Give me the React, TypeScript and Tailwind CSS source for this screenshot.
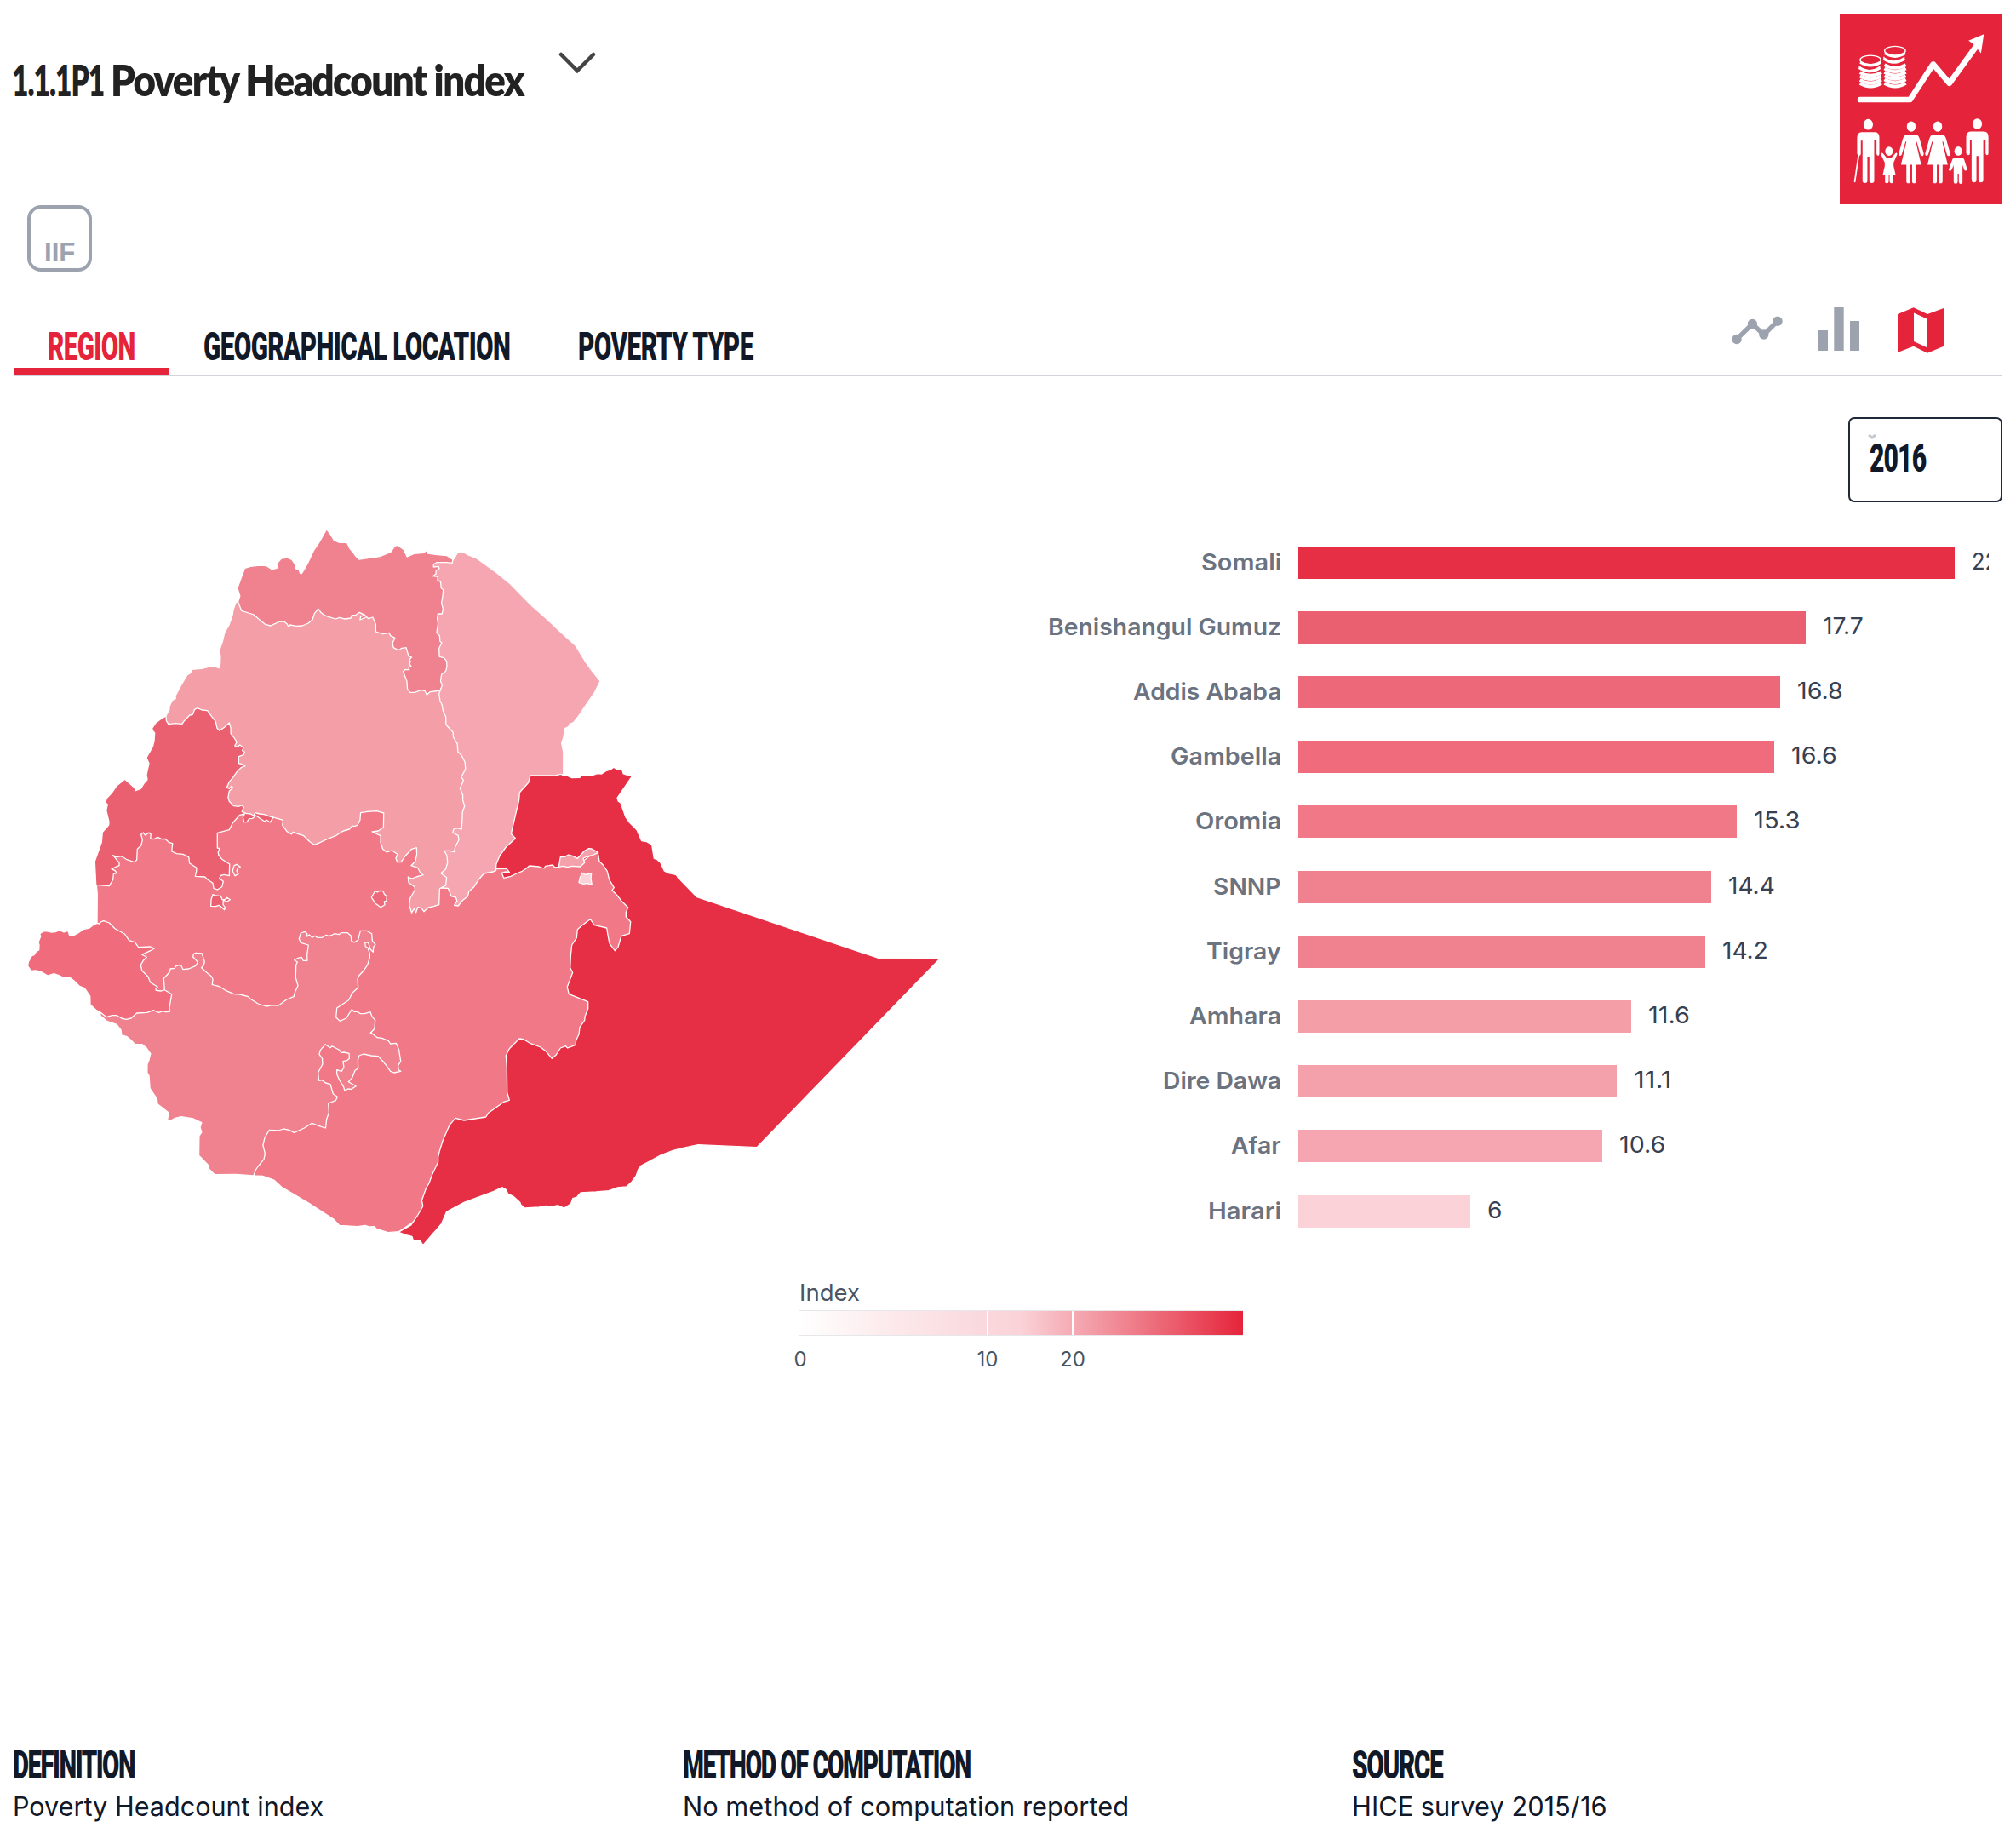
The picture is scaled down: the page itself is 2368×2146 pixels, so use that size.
import { useLayoutEffect, useRef, useState } from "react";
import type { ReactNode } from "react";

/* ---------- text squeezed to a set measure ---------- */

type FitProps = { width: number; className?: string; children: ReactNode };

function FitText({ width, className = "", children }: FitProps) {
  const ref = useRef<HTMLSpanElement>(null);
  const [scale, setScale] = useState(1);
  useLayoutEffect(() => {
    if (ref.current) setScale(width / ref.current.offsetWidth);
  }, [width]);
  return (
    <span className={`block whitespace-nowrap ${className}`} style={{ width }}>
      <span ref={ref} className="inline-block origin-left" style={{ transform: `scaleX(${scale})` }}>
        {children}
      </span>
    </span>
  );
}

/* ---------- map geometry ---------- */

// Boundaries are digitised per sheet: origin x, origin y, units per pixel in x and y.
const SHEETS = {
  N: [180, 600, 2.8, 3],
  W: [20, 800, 3, 3],
  C: [400, 880, 3, 3],
  S: [20, 1060, 2.8, 3],
  E: [590, 1030, 3, 3],
} as const;

type Sheet = keyof typeof SHEETS;
type Arc = [Sheet, string];

function toPath(arcs: Arc[]) {
  const points = arcs.flatMap(([sheet, data]) => {
    const [ox, oy, sx, sy] = SHEETS[sheet];
    return data.split(" ").map((pair) => {
      const [x, y] = pair.split(",").map(Number);
      return `${(ox + x / sx).toFixed(1)} ${(oy + y / sy).toFixed(1)}`;
    });
  });
  return `M${points.join("L")}Z`;
}

const C = {
  somali: "#e62e44",
  benishangul: "#eb6070",
  addis: "#ed697a",
  gambella: "#f06c7c",
  oromia: "#f17886",
  snnp: "#f0818e",
  tigray: "#ef828e",
  amhara: "#f49ea7",
  direDawa: "#f5a1ac",
  afar: "#f6a6b1",
  harari: "#fad2d7",
};

// Painted in order; later regions cover the hidden parts of earlier ones.
const REGIONS: { name: string; fill: string; arcs: Arc[] }[] = [
  {
    name: "Oromia",
    fill: C.oromia,
    arcs: [
      ["W", "280,718 283,750 282,853 300,1000"],
      ["S", "600,700 778,963 808,964 845,978 870,1003 960,1060 1040,1115 1060,1138 1120,1142 1145,1138 1160,1143 1175,1142 1182,1150 1220,1163 1255,1160 1340,1100"],
      ["E", "100,1000 600,400"],
      ["C", "1080,600 1000,350 700,300 500,200"],
      ["N", "600,900"],
      ["W", "700,300 400,500"],
    ],
  },
  {
    name: "SNNP",
    fill: C.snnp,
    arcs: [
      ["W", "520,1088 517,1048 538,1025 540,1014 555,1012 560,1004 572,1000 578,1002 585,1016 605,1014 630,1003 637,990 620,972 622,962 630,958 652,960 661,990 657,1002 650,1010 670,1028 685,1040 690,1050 688,1070 710,1075 735,1090 765,1103 785,1104 815,1112 822,1120 850,1137 878,1146 900,1142 922,1143 950,1122 975,1112 980,1095 990,1073 982,1045 983,1000 988,990 977,983 990,976 1003,973 1008,985 1023,985 1022,965 1027,930 1000,922 994,908 1000,888 1015,883 1022,890 1022,900 1030,894 1040,904 1050,898 1058,904 1075,904 1090,895 1098,899 1110,895 1118,890 1135,893 1142,887 1165,887 1177,898 1178,915 1188,921 1202,912 1210,880 1232,880 1250,890 1252,915 1263,928 1256,938 1255,955 1245,945 1238,922 1226,920 1228,935 1236,940 1243,960 1243,975 1235,1000 1222,1020 1205,1038 1200,1050 1202,1080 1180,1100 1175,1112 1168,1125 1127,1152 1124,1185 1138,1198 1160,1188 1180,1157 1188,1165 1200,1165 1210,1172 1225,1172 1245,1166 1250,1180 1262,1195 1260,1225 1246,1240"],
      ["S", "1163,458 1185,476 1200,478 1222,488 1228,498 1247,496 1256,520 1262,560 1253,575 1255,590 1262,595 1240,600 1228,595 1215,575 1205,562 1188,542 1165,540 1140,534 1125,540 1121,555 1122,585 1112,592 1102,618 1090,632 1115,647 1100,658 1088,657 1078,664 1074,650 1060,625 1052,605 1052,590 1068,595 1075,580 1072,560 1085,557 1093,550 1092,532 1075,528 1066,530 1060,520 1036,506 1030,512 1014,500 998,520 994,535 1004,550 1005,570 990,600 993,628 1003,626 1015,636 1030,640 1040,675 1054,685 1048,698 1024,708 1026,740 1018,765 1015,795 1000,790 985,784 970,778 945,795 912,811 895,802 877,798 860,804 830,802 815,828 809,855 816,885 812,905 793,930 785,942 778,963 720,958 650,959 632,940 628,925 598,892 599,823 607,810 602,792 607,776 595,770 580,762 540,755 520,760 500,772 495,765 498,740 480,725 462,710 460,692 437,655 434,610 428,600 428,572 434,555 439,533 425,512 412,500 388,500 375,485 360,472 344,468 342,450 328,430 295,418 275,400 273,390"],
      ["W", "330,1160 500,1110"],
    ],
  },
  {
    name: "Gambella",
    fill: C.gambella,
    arcs: [
      ["W", "282,853 268,860 255,870 233,875 215,888 197,898 185,897 180,880 165,885 150,878 135,884 122,885 110,882 95,881 80,890 83,900 75,920 78,930 77,948 68,952 60,965 52,968 40,990 38,1005 50,1021 65,1020 80,1023 92,1028 108,1038 130,1031 145,1036 158,1042 185,1044 200,1055 220,1075 238,1082 257,1110 258,1140 280,1160 295,1168 315,1184 335,1178 352,1178 368,1188 385,1192 402,1188 422,1170 458,1168 480,1160 500,1168 512,1163 525,1166 538,1165 537,1150 545,1103 520,1088 508,1092 490,1090 489,1084 496,1078 470,1062 462,1042 440,1020 436,1000 445,985 457,973 440,964 470,950 484,942 470,936 428,938 415,920 395,914 380,892 345,872 325,852 305,845 295,849 290,855"],
    ],
  },
  {
    name: "Somali",
    fill: C.somali,
    arcs: [
      ["C", "779,88 785,93 800,94 815,101 843,100 847,94 860,92 870,93 890,91 905,86 920,87 935,77 952,72 962,64 975,72 991,69 997,87 1010,91 1030,91 975,172 979,184 987,189 1005,240 1017,257 1044,284 1061,323 1079,326 1097,337 1105,385 1116,389 1127,399 1141,429 1156,437 1181,442 1201,461"],
      ["E", "617,0 686,71 1328,287 1542,288 897,953 690,944 630,957 600,965 560,980 490,1017 479,1031 472,1053 457,1074 437,1092 405,1095 375,1106 330,1110 276,1113 263,1128 248,1133 242,1151 218,1167 195,1157 175,1162 155,1159 130,1164 79,1167 66,1156 62,1147 38,1125 20,1117 13,1102 0,1094"],
      ["S", "1568,1018 1470,1057 1413,1090 1396,1132 1335,1208 1326,1192 1303,1191 1299,1177 1280,1172 1255,1162 1295,1138 1318,1102 1335,1070 1331,1050 1345,1008 1355,990 1365,960 1385,915 1385,898 1390,875 1400,840 1422,785 1442,760 1470,768 1542,756 1550,742 1568,728"],
      ["C", "560,1254 575,1243 595,1237 587,1210 586,1120 583,1080 595,1055 612,1038 630,1020 645,1022 670,1037 705,1050 725,1066 745,1090 760,1077 775,1053 793,1046 800,1053 828,1042 830,1025 840,1005 843,980 860,955 862,940 872,915 872,890 805,863 799,838 818,787 809,770 811,730 815,690 832,665 835,635 850,622 880,599 895,620 938,630 942,655 948,685 967,710 978,697 990,658 1018,650 1022,608 1006,590 1006,575 1013,557 990,535 975,515 957,497 964,488 947,460 940,430 925,408 912,395 907,365 895,362 860,390 840,400 790,400 769,415 755,417 748,408 735,410 722,412 717,420 700,414 665,411 655,420 640,430 620,438 600,448 575,454 568,436 582,432 595,434 585,420 547,422 530,400 560,260 600,100 660,70 779,70"],
    ],
  },
  {
    name: "Benishangul Gumuz",
    fill: C.benishangul,
    arcs: [
      ["W", "525,123 505,135 489,147 476,166 478,175 485,183 483,210 478,232 456,270 465,290 456,330 459,347 447,361 436,379 418,386 414,376 380,346 351,369 334,394 315,414 312,428 319,435 314,455 324,496 323,507 301,533 298,568 274,635 278,718 325,722 338,700 340,680 352,676 345,668 333,662 348,655 360,650 360,640 338,614 350,620 368,617 385,628 413,638 422,630 424,592 437,580 442,560 437,540 445,534 452,543 465,534 472,540 470,555 482,557 495,550 510,557 522,556 535,568 548,572 545,600 562,608 585,610 605,620 608,642 633,658 632,670 628,688 662,690 672,700 690,712 693,730 706,735 722,725 727,706 713,695 718,685 730,682 748,686 749,645 722,628 710,612 709,602 714,590 706,588 706,535 748,524 760,500 785,472 802,468 796,480 800,497 810,497 818,485 830,484 842,474 855,483 872,494 880,490 892,498 902,482 900,380 840,250 740,60 560,100"],
    ],
  },
  {
    name: "Benishangul Gumuz enclave",
    fill: C.benishangul,
    arcs: [["W", "690,752 700,756 718,757 723,770 732,770 740,763 751,770 740,777 727,772 726,788 733,797 731,806 722,797 712,790 700,794 683,793 684,770"]],
  },
  {
    name: "Benishangul Gumuz islet",
    fill: C.oromia,
    arcs: [["W", "762,660 765,650 775,646 787,655 778,660 774,668 780,680 768,686 760,670"]],
  },
  {
    name: "Amhara",
    fill: C.amhara,
    arcs: [
      ["N", "279,318 271,325 263,350 260,370 248,405 235,428 228,460 216,497 221,510 220,540 216,554 210,552 205,547 190,548 160,556 126,559 124,571 112,578 93,612 73,652 73,662 63,667 53,690 53,700 42,722 43,740 50,752 72,749 95,751 102,740 120,720 130,718 136,700 146,695 160,702 178,704 190,722 205,742 210,766 218,775 235,762 250,747 255,765 255,785 265,798 275,815 268,828 278,832 285,825 297,835 293,845 301,850 297,860 281,866 281,890 295,894 302,900 290,904 275,920 262,940 250,955 242,975 250,979 258,970 262,976 250,988 246,1010 250,1024 265,1040 280,1042 292,1038 298,1045 292,1060 305,1066 320,1068 330,1074 335,1064 350,1068 365,1070 380,1076 395,1080 410,1085 427,1090 425,1108 440,1130 455,1140 460,1132 475,1138 495,1145 515,1166 530,1177 550,1168 570,1158 600,1145 625,1128 645,1122 655,1110 660,1112 672,1108 680,1090 682,1064 705,1060 735,1058 758,1065 757,1115 740,1128 720,1131 748,1145 748,1170 755,1192 768,1203 785,1197 803,1210 798,1225 803,1238 815,1238 830,1215 850,1192 866,1187 867,1210 862,1235 848,1250 870,1258 878,1275 888,1283 878,1286 865,1290 850,1296 838,1290 840,1310 860,1325 861,1335 845,1365 842,1390 850,1417 858,1402 864,1415 870,1397 882,1400 890,1412 905,1398 922,1394 940,1388 942,1332 946,1329 1000,1300 1050,900 1000,600 1000,400 900,300 400,300"],
    ],
  },
  {
    name: "Tigray",
    fill: C.tigray,
    arcs: [
      ["N", "279,320 285,300 277,272 288,239 301,202 320,196 350,192 373,194 390,206 407,202 409,183 421,168 440,165 456,172 468,191 469,204 480,208 483,220 488,221 498,204 510,181 528,139 546,111 570,65 585,86 594,103 612,112 637,112 647,134 659,149 666,160 677,171 712,166 745,161 781,145 795,124 804,121 824,137 835,162 858,151 890,148 898,139 903,150 935,155 966,158 985,172 1000,200 1010,500 944,633 925,636 910,638 900,649 893,634 880,632 860,640 845,640 836,628 834,600 822,566 828,560 842,560 840,552 848,548 843,540 846,530 842,524 850,516 840,512 832,482 818,484 806,491 790,482 787,466 795,448 780,440 776,430 755,434 732,426 732,400 722,375 708,380 702,374 680,384 682,372 697,368 678,358 665,368 653,368 650,378 630,381 612,376 600,381 578,374 563,368 551,358 543,345 530,362 524,383 510,396 490,405 470,406 450,402 445,409 440,398 430,390 414,390 400,398 386,405 368,400 350,384 331,366 305,357 290,352"],
    ],
  },
  {
    name: "Afar",
    fill: C.afar,
    arcs: [
      ["N", "985,174 989,169 1002,145 1021,146 1036,156 1061,166 1091,188 1131,220 1175,258 1211,298 1241,331 1291,378 1341,428 1389,475 1422,533 1442,563 1470,600 1452,639 1422,686 1397,726 1382,746 1369,752 1366,761 1354,767 1349,800 1343,818 1349,850 1349,930 1340,928 1325,932 1240,933 1234,958 1205,992 1203,1020 1195,1055 1177,1138 1191,1154 1160,1185 1140,1215 1128,1245 1127,1268 1118,1272 1088,1278 1070,1300 1055,1325 1038,1342 1034,1360 1018,1372 1003,1392 990,1390 999,1375 995,1362 980,1358 970,1330 946,1329 962,1320 965,1292 946,1277 962,1262 968,1240 966,1215 957,1198 975,1198 990,1202 993,1185 1005,1160 1003,1144 985,1134 988,1122 1000,1118 1014,1122 1016,1090 1017,1062 1024,1040 1018,1020 1018,1002 1009,978 1020,950 1013,938 1027,910 1025,885 1013,860 1002,850 1000,820 987,798 986,780 963,754 962,725 953,705 950,685 943,668 940,645 944,633 950,615 945,600 948,577 962,565 966,548 965,530 956,518 941,514 940,484 949,465 943,460 942,440 932,430 937,398 934,380 936,363 950,363 953,345 948,325 952,300 954,278 947,272 945,250 935,245 936,232 920,230 930,222 930,211 941,203 938,196 922,198 922,188 932,182 965,182 983,184"],
    ],
  },
  {
    name: "Addis Ababa",
    fill: C.addis,
    arcs: [["W", "1262,740 1270,744 1278,739 1290,740 1294,750 1303,760 1302,775 1294,777 1296,788 1282,797 1262,783 1258,776 1249,762"]],
  },
  {
    name: "Dire Dawa",
    fill: C.direDawa,
    arcs: [["C", "769,415 775,380 790,379 803,372 820,377 835,385 860,358 875,350 885,351 908,364 885,375 868,378 855,385 860,400 845,414 815,412 800,416 785,412"]],
  },
  {
    name: "Harari",
    fill: C.harari,
    arcs: [["C", "852,436 862,442 884,437 882,455 886,478 870,473 855,475 840,470 844,452"]],
  },
];

function RegionMap() {
  return (
    <svg viewBox="16 590 1104 880" className="h-[880px] w-[1104px] shrink-0" role="img" aria-label="Map of regions">
      {REGIONS.map((r) => (
        <path key={r.name} d={toPath(r.arcs)} fill={r.fill} stroke="#fff" strokeWidth={1.3} strokeLinejoin="round" />
      ))}
    </svg>
  );
}

/* ---------- pictures ---------- */

function Adult({ x, y }: { x: number; y: number }) {
  return (
    <g transform={`translate(${x} ${y})`}>
      <ellipse cx="0" cy="-206" rx="16.500" ry="19" />
      <path d="M-24-179H24Q39-178 39-160V-103Q39-96 34.500-96T29-103V-149H26V-150H21V-8Q21 0 12.500 0T4-8V-93H-3V-8Q-3 0-11.500 0T-20-8V-149H-26V-103Q-26-96-31.500-96T-39-103V-160Q-38-178-24-179Z" />
    </g>
  );
}

function Woman({ x }: { x: number }) {
  return (
    <g transform={`translate(${x} 0)`}>
      <ellipse cx="0" cy="421.500" rx="15.500" ry="18.500" />
      <path d="M-19 450H19Q26 453 29 463L44 517Q44 525 38 525T32 519L19 474L16 475L35 556H17V613Q17 621 10 621T3 613V556H-3V613Q-3 621-10 621T-17 613V556H-36L-17 475L-20 474L-33 519Q-35 525-40 524T-44 516L-29 463Q-26 453-19 450Z" />
    </g>
  );
}

function CoinStack({ x, top, bands }: { x: number; top: number; bands: number[] }) {
  return (
    <g fill="none" stroke="#fff">
      <ellipse cx={x} cy={top} rx="36.500" ry="16" strokeWidth="4" />
      <path d={`M${x - 36} ${top + 8}Q${x} ${top + 31} ${x + 36} ${top + 8}`} strokeWidth="10" />
      <path d={`M${x - 39} ${top + 21}V${top + 31}Q${x - 4} ${top + 53} ${x + 32} ${top + 32}V${top + 22}`} strokeWidth="4" />
      <path d={`M${x - 39} ${top + 27}Q${x - 4} ${top + 52} ${x + 33} ${top + 27}`} strokeWidth="10" />
      {bands.map((b) => (
        <path key={b} d={`M${x - 37} ${b}Q${x} ${b + 22} ${x + 38} ${b}`} strokeWidth="11.500" />
      ))}
    </g>
  );
}

function GoalTile() {
  return (
    <svg viewBox="34 24 571 671" preserveAspectRatio="none" className="h-[224px] w-[191px] shrink-0" role="img" aria-label="No poverty">
      <rect x="34" y="24" width="571" height="671" fill="#e5243b" />
      <CoinStack x={142} top={187} bands={[231, 244, 257, 269]} />
      <CoinStack x={228} top={155} bands={[204, 217, 230, 243, 256, 269]} />
      <path d="M106 326.500H281L362 202L419 269L514 138" fill="none" stroke="#fff" strokeWidth="20" strokeLinecap="round" strokeLinejoin="round" />
      <path d="M540 97L486 119L503 131L516 147L530 163Z" fill="#fff" />
      <g fill="#fff">
        <Adult x={134} y={620} />
        <path d="M98 520L103 522L89 617Q85 620 84 615Z" />
        <Woman x={285} />
        <Woman x={378} />
        <Adult x={517} y={618} />
        <ellipse cx="207" cy="508" rx="13.500" ry="16" />
        <path d="M178 519Q181 511 186 516L199 532H215L229 516Q234 511 236 518L223 548V560L230 591H222V615Q222 621 216 621T209 615V592H206V615Q206 621 199 621T193 615V591H185L192 560V548Z" />
        <ellipse cx="450" cy="507.500" rx="13.500" ry="16" />
        <path d="M436 530H464Q469 532 471 538L481 570Q481 577 476 577T471 572L465 557V616Q465 623 459 623T452 616V587H448V616Q448 622 441 622T434 616V557L427 573Q424 579 419 577T418 570L429 538Q431 532 436 530Z" />
      </g>
    </svg>
  );
}

function TrendIcon() {
  return (
    <svg viewBox="2034 361 60 54" className="h-[54px] w-[60px]" fill="#9ca3af">
      <path d="M2040 398.400L2058.400 380.500L2071.800 393.200L2088 377" fill="none" stroke="#9ca3af" strokeWidth="5.500" />
      <circle cx="2040" cy="398.500" r="5.700" />
      <circle cx="2058.400" cy="380.500" r="5.700" />
      <circle cx="2071.800" cy="393" r="5.700" />
      <circle cx="2088" cy="377.200" r="5.700" />
    </svg>
  );
}

function BarsIcon() {
  return (
    <svg viewBox="2136 361 49 54" className="ml-[42px] h-[54px] w-[49px]" fill="#9ca3af">
      <path d="M2136 388h11v24h-11zM2154.300 361h11.400v51h-11.400zM2173 377h11v35h-11z" />
    </svg>
  );
}

function MapIcon() {
  return (
    <svg viewBox="2229 361 54 54" className="ml-[44px] h-[54px] w-[54px]" fill="#e5243b">
      <path fillRule="evenodd" d="M2229 369L2247.700 361.300L2264 369L2283 362V406.800L2264 414.700L2247.700 406.800L2229 414ZM2248 367.400V401L2264 408.500V374.800Z" />
    </svg>
  );
}

/* ---------- data ---------- */

const BARS = [
  { name: "Somali", value: "22.9", color: C.somali, bar: 771, label: 94, text: 54 },
  { name: "Benishangul Gumuz", value: "17.7", color: C.benishangul, bar: 596, label: 274, text: 48 },
  { name: "Addis Ababa", value: "16.8", color: C.addis, bar: 566, label: 174, text: 54 },
  { name: "Gambella", value: "16.6", color: C.gambella, bar: 559, label: 130, text: 54 },
  { name: "Oromia", value: "15.3", color: C.oromia, bar: 515, label: 101, text: 54 },
  { name: "SNNP", value: "14.4", color: C.snnp, bar: 485, label: 80, text: 55 },
  { name: "Tigray", value: "14.2", color: C.tigray, bar: 478, label: 88, text: 54 },
  { name: "Amhara", value: "11.6", color: C.amhara, bar: 390.5, label: 108, text: 49 },
  { name: "Dire Dawa", value: "11.1", color: C.direDawa, bar: 374, label: 139, text: 45 },
  { name: "Afar", value: "10.6", color: C.afar, bar: 357, label: 59, text: 54 },
  { name: "Harari", value: "6", color: C.harari, bar: 202, label: 86, text: 17 },
];

const TABS = [
  { name: "REGION", width: 103, active: true },
  { name: "GEOGRAPHICAL LOCATION", width: 360, active: false },
  { name: "POVERTY TYPE", width: 206, active: false },
];

const NOTES = [
  { title: "DEFINITION", titleWidth: 143, body: "Poverty Headcount index", bodyWidth: 365 },
  { title: "METHOD OF COMPUTATION", titleWidth: 338, body: "No method of computation reported", bodyWidth: 524 },
  { title: "SOURCE", titleWidth: 106, body: "HICE survey 2015/16", bodyWidth: 300 },
];

/* ---------- page ---------- */

export default function App() {
  return (
    <main className="flex h-[2146px] w-[2368px] flex-col overflow-hidden bg-white px-4 pt-4 pb-[4px] font-['Inter',sans-serif] text-[#111827]">
      <header className="flex h-[224px] shrink-0 items-start justify-between">
        <div className="flex items-start">
          <h1 className="mt-[38px] -ml-0.5 flex gap-[8px] font-['Lato',sans-serif] text-[51px] leading-[80px] font-extrabold text-[#222]">
            <FitText width={108} className="tracking-[-0.03em]">1.1.1P1</FitText>
            <FitText width={485} className="tracking-[-0.035em]">Poverty Headcount index</FitText>
          </h1>
          <svg viewBox="0 0 44 26" className="mt-[45px] ml-[41px] h-[26px] w-[44px]" fill="none" stroke="#444" strokeWidth="4.500" strokeLinecap="round">
            <path d="M3 3L22 22L41 3" />
          </svg>
        </div>
        <GoalTile />
      </header>

      <div className="mt-px ml-4 flex h-[78px] w-[76px] shrink-0 items-end justify-center rounded-[16px] border-4 border-[#9ca3af] font-['Liberation_Sans',sans-serif] text-[32px] leading-[38px] font-bold text-[#9ca3af]">
        <FitText width={36}>IIF</FitText>
      </div>

      <nav className="flex h-[123px] shrink-0 items-end justify-between border-b-2 border-[#d1d5db] pr-[69px]">
        <div className="flex">
          {TABS.map((t) => (
            <button
              key={t.name}
              className={
                t.active
                  ? "border-b-8 border-[#e5243b] px-10 text-left font-['Roboto',sans-serif] text-[46px] leading-[50px] font-black tracking-[-0.02em] text-[#e5243b]"
                  : "border-b-8 border-transparent px-10 text-left font-['Roboto',sans-serif] text-[46px] leading-[50px] font-black tracking-[-0.02em]"
              }
            >
              <FitText width={t.width}>{t.name}</FitText>
            </button>
          ))}
        </div>
        <div className="mb-[25px] flex">
          <TrendIcon />
          <BarsIcon />
          <MapIcon />
        </div>
      </nav>

      <div className="mt-12 flex shrink-0 justify-end">
        <div className="relative flex h-[100px] w-[181px] items-center rounded-[7px] border-2 border-[#1f2937] pl-[23px] font-['Roboto',sans-serif] text-[47px] leading-[50px] font-black">
          <FitText width={66} className="-mt-1 tracking-[-0.03em]">2016</FitText>
          <svg viewBox="0 0 10 6" className="absolute top-[18px] left-[21px] h-[6px] w-[10px]" fill="none" stroke="#c5c9d0" strokeWidth="3">
            <path d="M1 1L5 4L9 1" />
          </svg>
        </div>
      </div>

      <section className="flex shrink-0">
        <RegionMap />
        <div className="mt-[32.6px] mr-4 flex flex-1 flex-col overflow-hidden text-[26.5px] leading-[38px]">
          {BARS.map((b) => (
            <div key={b.name} className="flex h-[76.2px] shrink-0 items-center">
              <div className="-mt-[2px] flex w-[385px] shrink-0 justify-end font-semibold text-[#6b7280]">
                <FitText width={b.label}>{b.name}</FitText>
              </div>
              <div className="ml-[20px] h-[38px] shrink-0" style={{ width: b.bar, backgroundColor: b.color }} />
              <div className="-mt-[4px] ml-5 shrink-0 text-[#374151]">
                <FitText width={b.text}>{b.value}</FitText>
              </div>
            </div>
          ))}
        </div>
      </section>

      <section className="mt-[31px] ml-[923px] w-[521px] shrink-0 text-[#4b5563]">
        <div className="-mt-px text-[27.5px] leading-9">
          <FitText width={71}>Index</FitText>
        </div>
        <div className="mt-[3px] flex h-[30px] border-y border-[#e5e7eb] bg-[linear-gradient(90deg,#ffffff_0%,#fce8ea_22%,#fad8dd_42%,#fad2d7_50%,#f5abb4_61.5%,#ef828e_74%,#ea5062_88%,#e5243b_100%)]">
          <div className="w-[220px]" />
          <div className="w-[100px] border-l-2 border-white" />
          <div className="flex-1 border-l-2 border-white" />
        </div>
        <div className="mt-3 flex pl-px text-[24px] leading-8">
          <div className="flex w-[220px]">
            <span className="flex w-0 justify-center">0</span>
          </div>
          <div className="flex w-[100px]">
            <span className="flex w-0 justify-center">10</span>
          </div>
          <span className="flex w-0 justify-center">20</span>
        </div>
      </section>

      <footer className="mt-auto grid shrink-0 grid-cols-3 gap-6">
        {NOTES.map((n) => (
          <div key={n.title}>
            <h2 className="-mt-px -ml-px font-['Roboto',sans-serif] text-[46px] leading-10 font-black tracking-[-0.05em]">
              <FitText width={n.titleWidth}>{n.title}</FitText>
            </h2>
            <p className="mt-[9px] -ml-px text-[31px] leading-10">
              <FitText width={n.bodyWidth}>{n.body}</FitText>
            </p>
          </div>
        ))}
      </footer>
    </main>
  );
}
